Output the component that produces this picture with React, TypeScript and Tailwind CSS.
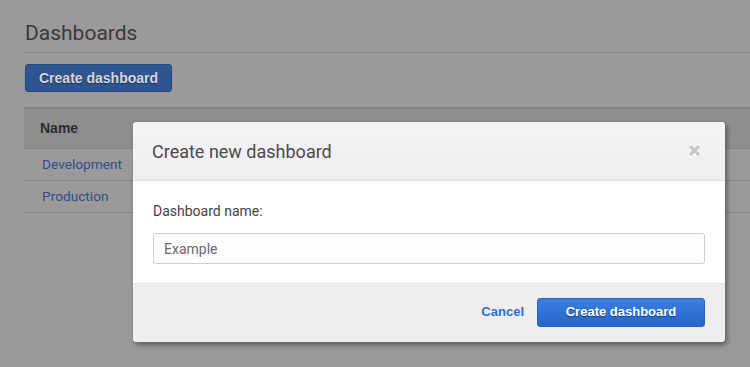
import React from 'react';

// Dimmed dashboards list with the "create" modal open on top
const rows = ['Development', 'Production'];

const App: React.FC = () => {
  return (
    <div className="relative w-[750px] h-[367px] overflow-hidden bg-[#9b999a] font-['Roboto',sans-serif]">
      {/* page behind the overlay */}
      <div className="pl-6 pt-[20px]">
        <h1 className="text-[21px] leading-[26px] text-[#3b393a] pl-[1px]">Dashboards</h1>
        <div className="mt-[6px] h-px bg-[#878586]" />
        <button className="mt-[11px] ml-px h-[28px] px-[13px] rounded-[3px] bg-[#2c5592] border border-[#24477d] text-[14px] font-bold text-[#d6d6da] font-['Liberation_Sans',Arial,sans-serif] [text-shadow:0_1px_1px_rgba(0,0,0,0.4)]">
          Create dashboard
        </button>
        <div className="mt-[15px] border-t-2 border-[#858384]">
          <div className="h-[40px] flex items-center pl-4 bg-[#8f8d8e] border-b border-[#878586]">
            <span className="text-[14px] font-bold text-[#2e2c2d] font-['Liberation_Sans',Arial,sans-serif]">Name</span>
          </div>
          {rows.map((r) => (
            <div key={r} className="h-[32px] flex items-center pl-[18px] border-b border-[#888687]">
              <span className="text-[13.7px] text-[#2f4f8b]">{r}</span>
            </div>
          ))}
        </div>
      </div>

      {/* modal */}
      <div className="absolute left-[133px] top-[122px] w-[592px] rounded-[4px] bg-white shadow-[2px_3px_5px_rgba(0,0,0,0.4)] overflow-hidden">
        <div className="h-[59px] flex items-center justify-between pl-[19px] pr-[25px] bg-gradient-to-b from-[#f5f4f6] to-[#efeef0] border-b border-[#e0dfe1]">
          <h2 className="text-[18px] text-[#4b4a4c]">Create new dashboard</h2>
          <svg width="11" height="11" viewBox="0 0 11 11" className="mt-[-2px]">
            <path d="M2 2 L9 9 M9 2 L2 9" stroke="#c6c5c8" strokeWidth="3" strokeLinecap="round" />
          </svg>
        </div>
        <div className="px-5 pt-[22px] pb-[19px]">
          <label className="block text-[14px] leading-[16px] text-[#444345]">Dashboard name:</label>
          <input
            placeholder="Example"
            className="mt-[14px] block w-full h-[31px] px-[10px] rounded-[3px] border border-[#cfcfd1] bg-[#fdfcfe] text-[14px] placeholder:text-[#6a696b] outline-none"
          />
        </div>
        <div className="h-[59px] flex items-center justify-end gap-[13px] pr-5 pb-[2px] bg-[#efedf0] border-t border-[#e3e2e4]">
          <button className="text-[13px] font-bold text-[#2d6fd0] font-['Liberation_Sans',Arial,sans-serif]">Cancel</button>
          <button className="w-[168px] h-[29px] rounded-[3px] bg-gradient-to-b from-[#3c80e0] to-[#2564c8] border border-[#2a60bd] text-[13px] font-bold text-white font-['Liberation_Sans',Arial,sans-serif] [text-shadow:0_1px_1px_rgba(0,0,0,0.45)]">
            Create dashboard
          </button>
        </div>
      </div>
    </div>
  );
};

export default App;
